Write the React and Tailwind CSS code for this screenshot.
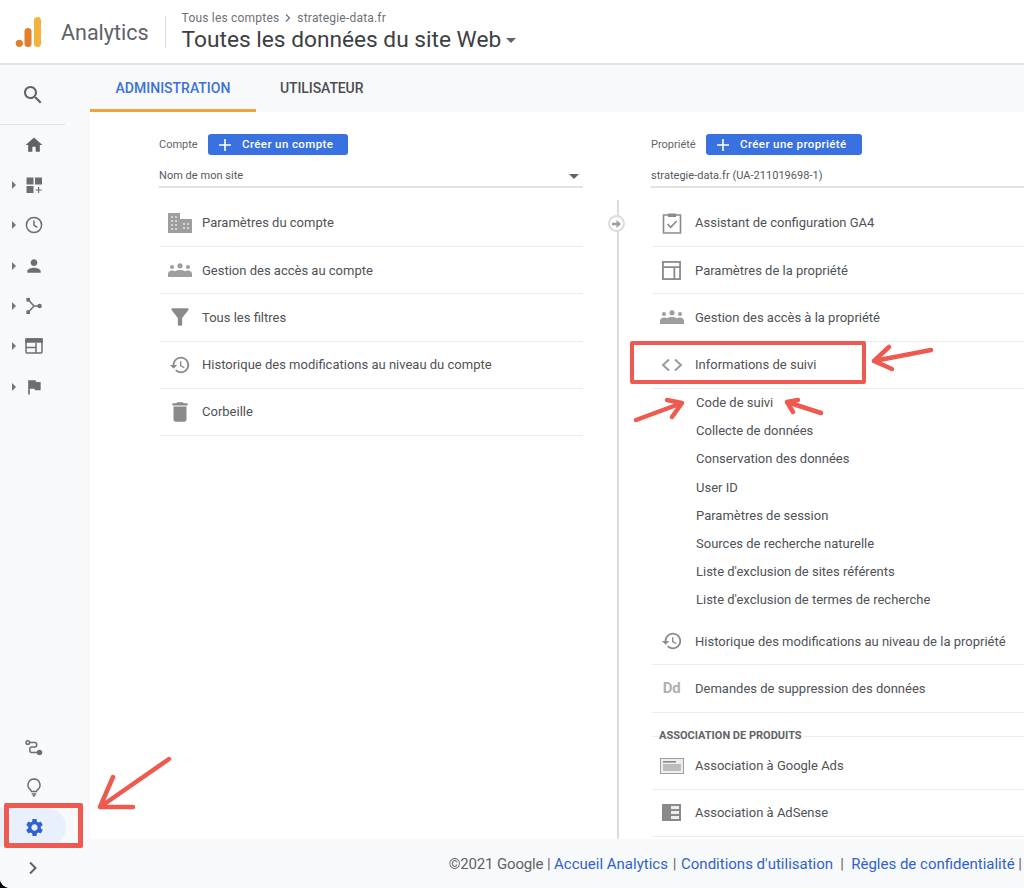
import React from 'react';

const roboto = { fontFamily: 'Roboto, sans-serif' };

// material icon paths
const P = {
  search: 'M15.5 14h-.79l-.28-.27C15.41 12.59 16 11.11 16 9.5 16 5.91 13.09 3 9.5 3S3 5.91 3 9.5 5.91 16 9.5 16c1.61 0 3.09-.59 4.23-1.57l.27.28v.79l5 4.99L20.49 19l-4.99-5zm-6 0C7.01 14 5 11.99 5 9.5S7.01 5 9.5 5 14 7.01 14 9.5 11.99 14 9.5 14z',
  home: 'M10 20v-6h4v6h5v-8h3L12 3 2 12h3v8z',
  person: 'M12 12c2.21 0 4-1.79 4-4s-1.79-4-4-4-4 1.79-4 4 1.79 4 4 4zm0 2c-2.67 0-8 1.34-8 4v2h16v-2c0-2.66-5.33-4-8-4z',
  flag: 'M14.4 6L14 4H5v17h2v-7h5.6l.4 2h7V6z',
  filter: 'M4.25 5.61C6.27 8.2 10 13 10 13v6c0 .55.45 1 1 1h2c.55 0 1-.45 1-1v-6s3.72-4.8 5.74-7.39c.51-.66.04-1.61-.79-1.61H5.04c-.83 0-1.3.95-.79 1.61z',
  trash: 'M6 19c0 1.1.9 2 2 2h8c1.1 0 2-.9 2-2V7H6v12zM19 4h-3.5l-1-1h-5l-1 1H5v2h14V4z',
  history: 'M13 3c-4.97 0-9 4.03-9 9H1l3.89 3.89.07.14L9 12H6c0-3.87 3.13-7 7-7s7 3.13 7 7-3.13 7-7 7c-1.93 0-3.68-.79-4.94-2.06l-1.42 1.42C8.27 19.99 10.51 21 13 21c4.97 0 9-4.03 9-9s-4.03-9-9-9zm-1 5v5l4.28 2.54.72-1.21-3.5-2.08V8H12z',
  gear: 'M19.14 12.94c.04-.3.06-.61.06-.94 0-.32-.02-.64-.07-.94l2.03-1.58c.18-.14.23-.41.12-.61l-1.92-3.32c-.12-.22-.37-.29-.59-.22l-2.39.96c-.5-.38-1.03-.7-1.62-.94l-.36-2.54c-.04-.24-.24-.41-.48-.41h-3.84c-.24 0-.43.17-.47.41l-.36 2.54c-.59.24-1.13.57-1.62.94l-2.39-.96c-.22-.08-.47 0-.59.22L2.74 8.87c-.12.21-.08.47.12.61l2.03 1.58c-.05.3-.09.63-.09.94s.02.64.07.94l-2.03 1.58c-.18.14-.23.41-.12.61l1.92 3.32c.12.22.37.29.59.22l2.39-.96c.5.38 1.03.7 1.62.94l.36 2.54c.05.24.24.41.48.41h3.84c.24 0 .44-.17.47-.41l.36-2.54c.59-.24 1.13-.56 1.62-.94l2.39.96c.22.08.47 0 .59-.22l1.92-3.32c.12-.22.07-.47-.12-.61l-2.01-1.58zM12 15.6c-1.98 0-3.6-1.62-3.6-3.6s1.62-3.6 3.6-3.6 3.6 1.62 3.6 3.6-1.62 3.6-3.6 3.6z',
};

function Mat({ d, size = 24, className = 'text-[#5f6368]' }) {
  return (
    <svg width={size} height={size} viewBox="0 0 24 24" fill="currentColor" className={className}>
      <path d={d} />
    </svg>
  );
}

const Customize = () => (
  <svg width="20" height="20" viewBox="0 0 20 20" fill="#6b6e72">
    <rect x="2.5" y="2.5" width="7" height="7" />
    <rect x="11" y="2.5" width="7" height="7" />
    <rect x="2.5" y="11" width="7" height="7" />
    <path d="M14 12h1.2v2.4h2.6v1.2h-2.6V18H14v-2.4h-2.4v-1.2H14z" />
  </svg>
);
const Clock = () => (
  <svg width="20" height="20" viewBox="0 0 20 20" fill="none" stroke="#6b6e72" strokeWidth="1.5">
    <circle cx="10" cy="10" r="7.6" />
    <path d="M10 5.5V10.4l3.4 2" />
  </svg>
);
const Acquisition = () => (
  <svg width="20" height="20" viewBox="0 0 20 20" fill="#6b6e72" stroke="#6b6e72">
    <path d="M4 3.5 10 10h6M10 10 4 16.5" strokeWidth="1.5" fill="none" />
    <rect x="2.4" y="2" width="3.6" height="3.6" stroke="none" />
    <rect x="2.4" y="14.4" width="3.6" height="3.6" stroke="none" />
    <circle cx="15.6" cy="10" r="2.2" stroke="none" />
  </svg>
);
const Behavior = () => (
  <svg width="20" height="20" viewBox="0 0 20 20" fill="none" stroke="#6b6e72" strokeWidth="1.5">
    <rect x="2" y="3" width="16" height="14" rx="1" />
    <rect x="2" y="3" width="16" height="3" fill="#6b6e72" />
    <path d="M2 11.5h10M12 7v10" />
  </svg>
);
const Path = ({ size = 20 }) => (
  <svg width={size} height={size} viewBox="0 0 20 20" fill="none" stroke="#6b6e72" strokeWidth="1.5">
    <circle cx="3.8" cy="3.5" r="1.8" />
    <path d="M5.6 3.5H11c2.3 0 2.3 4.4 0 4.4H7.5c-2.3 0-2.3 5.6 0 5.6H14" />
    <circle cx="15.5" cy="13.5" r="2" fill="#6b6e72" />
  </svg>
);
const Bulb = () => (
  <svg width="20" height="20" viewBox="0 0 20 20" fill="none" stroke="#6b6e72" strokeWidth="1.5">
    <path d="M10 2a6 6 0 0 0-3.3 11c.5.4.8.9.8 1.5h5c0-.6.3-1.1.8-1.5A6 6 0 0 0 10 2z" />
    <path d="M7.8 17h4.4M8.8 18.8h2.4" />
  </svg>
);

const Building = () => (
  <svg width="24" height="20" viewBox="0 0 24 20" fill="#9e9e9e">
    <path d="M0 0h12v6h12v14H0z" />
    <g fill="#d4d4d4">
      <rect x="3" y="3" width="2" height="2" /><rect x="7" y="3" width="2" height="2" />
      <rect x="3" y="7" width="2" height="2" /><rect x="7" y="7" width="2" height="2" />
      <rect x="3" y="11" width="2" height="2" /><rect x="7" y="11" width="2" height="2" />
      <rect x="3" y="15" width="2" height="2" /><rect x="7" y="15" width="2" height="2" />
      <rect x="15" y="10" width="2" height="2" /><rect x="19" y="10" width="2" height="2" />
      <rect x="15" y="14" width="2" height="2" /><rect x="19" y="14" width="2" height="2" />
    </g>
  </svg>
);
const Group = () => (
  <svg width="24" height="14" viewBox="0 0 24 14" fill="#9e9e9e">
    <circle cx="4" cy="4" r="2" />
    <circle cx="12" cy="2.8" r="2.6" />
    <circle cx="20" cy="4" r="2" />
    <path d="M0 14v-3c0-2 2-3.4 4-3.4 1.2 0 2.2.2 3 .7 1.4-.9 3.2-1.3 5-1.3s3.6.4 5 1.3c.8-.5 1.8-.7 3-.7 2 0 4 1.4 4 3.4v3z" />
  </svg>
);
const Clipboard = () => (
  <svg width="20" height="22" viewBox="0 0 20 22" fill="none" stroke="#8a8a8a" strokeWidth="1.6">
    <path d="M6 3H1.5v18h17V3H14" />
    <path d="M6 1.5h8V5H6z" fill="#8a8a8a" stroke="none" />
    <path d="M5.5 12l3.2 3.4 6-6.4" />
  </svg>
);
const Layout = () => (
  <svg width="19" height="19" viewBox="0 0 20 20" fill="none" stroke="#8a8a8a" strokeWidth="1.9">
    <rect x="1" y="1" width="18" height="18" />
    <path d="M1 6.5h18M13 6.5V19" />
  </svg>
);
const Code = () => (
  <svg width="22" height="14" viewBox="0 0 22 14" fill="none" stroke="#9a9a9a" strokeWidth="2">
    <path d="M8 1.5 2 7l6 5.5M14 1.5 20 7l-6 5.5" />
  </svg>
);
const Ads = () => (
  <svg width="24" height="16" viewBox="0 0 24 16" fill="none">
    <rect x="0.5" y="0.5" width="23" height="15" fill="#eeeeee" stroke="#9e9e9e" />
    <rect x="3" y="3" width="13" height="1.6" fill="#8a8a8a" />
    <rect x="3" y="6" width="18" height="7" fill="#bdbdbd" />
  </svg>
);
const AdSense = () => (
  <svg width="19" height="17" viewBox="0 0 19 17" fill="#8a8a8a">
    <path d="M0 0h19v17H0z" />
    <path d="M9 2h8v3H9zM9 7h8v3H9zM9 12h8v3H9z" fill="#eeeeee" />
  </svg>
);

const Dd = () => <span className="text-[15px] font-bold text-[#b0b0b0] tracking-[-0.3px]">Dd</span>;

const navItems = [
  <Customize key="a" />,
  <Clock key="b" />,
  <Mat key="c" d={P.person} size={20} className="text-[#6b6e72]" />,
  <Acquisition key="d" />,
  <Behavior key="e" />,
  <Mat key="f" d={P.flag} size={20} className="text-[#6b6e72]" />,
];

function Sidebar() {
  return (
    <div className="w-[90px] shrink-0 flex flex-col bg-[#f8f9fb]">
      <div className="h-[60px] w-[65px] border-b border-[#dfe1e5] flex items-center justify-center">
        <Mat d={P.search} size={24} />
      </div>
      <div className="w-[68px] h-[40px] flex items-center justify-center">
        <Mat d={P.home} size={20} />
      </div>
      {navItems.map((icon, i) => (
        <div key={i} className="w-[68px] h-[40.3px] flex items-center">
          <span className="w-0 h-0 ml-[12px] mr-[8px] border-y-[4px] border-y-transparent border-l-[4px] border-l-[#757575]" />
          {icon}
        </div>
      ))}
      <div className="mt-auto w-[68px] h-[40px] pt-[3px] flex items-center justify-center">
        <Path />
      </div>
      <div className="w-[68px] h-[40px] flex items-center justify-center">
        <Bulb />
      </div>
      <div className="mt-px w-[66px] h-[38px] rounded-r-full bg-[#e8f0fe] flex items-center justify-center pl-[2px]">
        <Mat d={P.gear} size={21} className="text-[#2f62d0]" />
      </div>
      <div className="w-[66px] h-[42px] pt-[2px] flex items-center justify-center">
        <svg width="14" height="14" viewBox="0 0 14 14" fill="none" stroke="#5f6368" strokeWidth="2">
          <path d="M4 1.5 9.5 7 4 12.5" />
        </svg>
      </div>
    </div>
  );
}

function Row({ icon, label, tight }) {
  return (
    <div className="h-[47.2px] ml-px flex items-center text-[13px] text-[#4f5256] border-b border-[#ececec]">
      <div className="w-[39px] flex justify-center">{icon}</div>
      <span className={tight ? 'pl-[3px] whitespace-nowrap' : 'pl-[4px] whitespace-nowrap'}>{label}</span>
    </div>
  );
}

function Head({ label, labelClass, button, select, caret }) {
  return (
    <>
      <div className="flex items-center h-[21px] text-[11px] text-[#5f6368]">
        <span className={labelClass}>{label}</span>
        <button className="h-[21px] pl-[10px] pr-[15px] rounded-[3px] bg-[#3a71e0] text-white text-[11.5px] font-medium tracking-[0.4px] flex items-center gap-[10px] whitespace-nowrap">
          <svg width="14" height="14" viewBox="0 0 14 14" stroke="white" strokeWidth="1.6"><path d="M7 1v12M1 7h12" /></svg>
          {button}
        </button>
      </div>
      <div className="mt-[11px] h-[22px] border-b-2 border-[#e3e3e3] flex items-center justify-between text-[11px] tracking-[0.03px] text-[#55585c] pr-[4px]">
        <span className="whitespace-nowrap">{select}</span>
        {caret && <span className="w-0 h-0 border-x-[5px] border-x-transparent border-t-[5px] border-t-[#5f6368]" />}
      </div>
    </>
  );
}

const subItems = [
  'Code de suivi',
  'Collecte de données',
  'Conservation des données',
  'User ID',
  'Paramètres de session',
  'Sources de recherche naturelle',
  "Liste d'exclusion de sites référents",
  "Liste d'exclusion de termes de recherche",
];

function AccountColumn() {
  return (
    <div className="w-[424px] shrink-0">
      <Head label="Compte" labelClass="w-[49px] pt-[2px] whitespace-nowrap" button="Créer un compte" select="Nom de mon site" caret />
      <div className="mt-[12px]">
        <Row tight icon={<Building />} label="Paramètres du compte" />
        <Row tight icon={<Group />} label="Gestion des accès au compte" />
        <Row tight icon={<Mat d={P.filter} size={26} className="text-[#8a8a8a]" />} label="Tous les filtres" />
        <Row tight icon={<Mat d={P.history} size={22} className="text-[#8a8a8a]" />} label="Historique des modifications au niveau du compte" />
        <Row tight icon={<Mat d={P.trash} size={26} className="text-[#8a8a8a]" />} label="Corbeille" />
      </div>
    </div>
  );
}

function PropertyColumn() {
  return (
    <div className="flex-1 min-w-0">
      <Head label="Propriété" labelClass="w-[55px] pt-[2px] whitespace-nowrap" button="Créer une propriété" select="strategie-data.fr (UA-211019698-1)" />
      <div className="mt-[12px]">
        <Row icon={<Clipboard />} label="Assistant de configuration GA4" />
        <Row icon={<Layout />} label="Paramètres de la propriété" />
        <Row icon={<Group />} label="Gestion des accès à la propriété" />
        <Row icon={<Code />} label="Informations de suivi" />
        <div className="pb-[4px] ml-[45px] text-[13px] text-[#4f5256]">
          {subItems.map((s) => (
            <div key={s} className="h-[28.2px] flex items-center whitespace-nowrap">{s}</div>
          ))}
        </div>
        <Row icon={<Mat d={P.history} size={22} className="text-[#8a8a8a]" />} label="Historique des modifications au niveau de la propriété" />
        <Row icon={<Dd />} label="Demandes de suppression des données" />
        <div className="relative h-[24px] ml-px border-b border-[#ececec]">
          <span className="absolute left-[7px] top-[16px] bg-white pr-[2px] text-[11px] leading-[14px] font-bold text-[#5f6368] whitespace-nowrap">ASSOCIATION DE PRODUITS</span>
        </div>
        <div className="h-[53px] pt-[6px] ml-px flex items-center text-[13px] text-[#4f5256] border-b border-[#ececec]">
          <div className="w-[39px] flex justify-center"><Ads /></div>
          <span className="pl-[4px] whitespace-nowrap">Association à Google Ads</span>
        </div>
        <Row icon={<AdSense />} label="Association à AdSense" />
      </div>
    </div>
  );
}

function Annotations() {
  return (
    <>
      <div className="absolute left-[630px] top-[341px] w-[236px] h-[43px] border-[4px] border-[#ef5a50] rounded-[2px]" />
      <div className="absolute left-[4px] top-[803px] w-[79px] h-[45px] border-[5px] border-[#ef5a50] rounded-[2px]" />
      <svg className="absolute left-0 top-0 pointer-events-none" width="1024" height="888" fill="none" stroke="#ef5a50" strokeWidth="4.5" strokeLinecap="round" strokeLinejoin="round">
        <path d="M169 759 100 807M113 777 100 807 133 807" />
        <path d="M931 350 874 361M889 347 874 361 892 369" />
        <path d="M636 420 682 403M667 400 682 403 672 417" />
        <path d="M821 413 787 402M798 400 787 402 793 412" />
      </svg>
    </>
  );
}

export default function App() {
  return (
    <div style={roboto} className="relative w-[1024px] h-[888px] overflow-hidden bg-black">
      <div className="h-full flex flex-col bg-white rounded-bl-[10px] overflow-hidden">
        {/* Header */}
        <div className="h-[65px] shrink-0 flex items-center border-b-2 border-[#e2e3e5]">
          <svg width="30" height="32" viewBox="0 0 30 32" className="ml-[15px]">
            <rect x="19" y="1" width="7" height="30" rx="3.5" fill="#f4b13c" />
            <rect x="9.5" y="12" width="7" height="19" rx="3.5" fill="#e07f2c" />
            <circle cx="4.3" cy="27.3" r="3.6" fill="#e07f2c" />
          </svg>
          <span className="ml-[16px] mt-[3px] text-[21.5px] text-[#5f6368]">Analytics</span>
          <div className="ml-[16px] h-[32px] w-px bg-[#dadce0]" />
          <div className="ml-[16px]">
            <div className="flex items-center text-[12px] tracking-[0.2px] text-[#6d7175] leading-[16px]">
              Tous les comptes
              <svg width="8" height="10" viewBox="0 0 8 10" fill="none" stroke="#6d7175" strokeWidth="1.2" className="mx-[5px]"><path d="M2 1.5 5.5 5 2 8.5" /></svg>
              strategie-data.fr
            </div>
            <div className="flex items-center text-[22.7px] text-[#3c4043] leading-[27px]">
              Toutes les données du site Web
              <span className="ml-[5px] mt-[1px] w-0 h-0 border-x-[5px] border-x-transparent border-t-[5px] border-t-[#5f6368]" />
            </div>
          </div>
        </div>

        <div className="flex-1 flex min-h-0 bg-[#f8f9fb]">
          <Sidebar />
          <div className="flex-1 min-w-0 flex flex-col">
            {/* Tabs */}
            <div className="h-[47px] shrink-0 flex">
              <div className="w-[166px] flex items-center justify-center pt-[3px] border-b-[3px] border-[#f2a33c] text-[14px] font-medium text-[#3b71d8]">ADMINISTRATION</div>
              <div className="ml-[24px] flex items-center pt-[3px] pb-[3px] text-[14px] tracking-[-0.1px] font-medium text-[#4a4d50]">UTILISATEUR</div>
            </div>
            {/* Columns */}
            <div className="h-[727px] shrink-0 bg-white flex pl-[69px] pt-[22px] overflow-hidden">
              <AccountColumn />
              <div className="w-[68px] shrink-0 flex justify-center">
                <div className="relative w-[2px] ml-[2px] mt-[66px] mb-[-30px] bg-[#dcdcdc]">
                  <div className="absolute left-[-9px] top-[15px] w-[17px] h-[17px] rounded-full border-2 border-[#dcdcdc] bg-white flex items-center justify-center">
                    <svg width="9" height="8" viewBox="0 0 9 8" fill="#9e9e9e"><path d="M0 2.8h4.5V0L9 4 4.5 8V5.2H0z" /></svg>
                  </div>
                </div>
              </div>
              <PropertyColumn />
            </div>
            {/* Footer */}
            <div className="flex-1 flex items-center justify-end pr-[2px] pt-[2px] text-[15px] text-[#5f6368] whitespace-nowrap">
              <span className="tracking-[-0.15px]">©2021 Google&nbsp;|&nbsp;</span>
              <span className="text-[#2f62d0]">Accueil Analytics</span>
              <span className="px-px">&nbsp;|&nbsp;</span>
              <span className="text-[#2f62d0]">Conditions d'utilisation</span>
              <span className="px-[3.5px]">&nbsp;|&nbsp;</span>
              <span className="text-[#2f62d0]">Règles de confidentialité</span>
              <span>&nbsp;|</span>
            </div>
          </div>
        </div>
      </div>
      <Annotations />
    </div>
  );
}
